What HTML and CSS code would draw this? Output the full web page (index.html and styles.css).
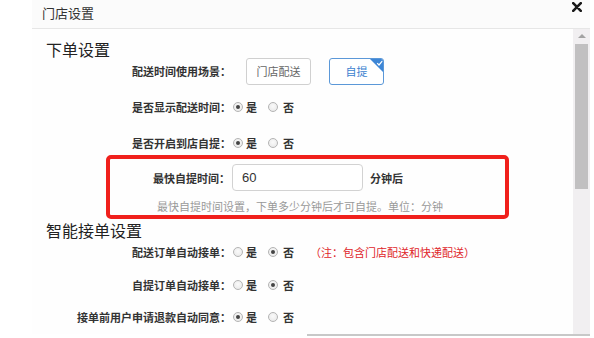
FILE: index.html
```html
<!DOCTYPE html>
<html lang="zh-CN">
<head>
<meta charset="utf-8">
<title>门店设置</title>
<link rel="stylesheet" href="styles.css">
</head>
<body>
<div class="dialog">
  <div class="header">
    <div class="title">门店设置</div>
    <div class="close">
      <svg width="10" height="10" viewBox="0 0 10 10"><path d="M1.2 1.2 L8.8 8.8 M8.8 1.2 L1.2 8.8" stroke="#1a1a1a" stroke-width="2.6" stroke-linecap="round"/></svg>
    </div>
  </div>
  <div class="body">
    <div class="content">
      <div class="heading h1">下单设置</div>

      <div class="row row-btns">
        <div class="label">配送时间使用场景：</div>
        <div class="opt-btn">门店配送</div>
        <div class="opt-btn active">自提
          <svg class="corner" width="16" height="16" viewBox="0 0 16 16"><polygon points="1,0 16,0 16,15" fill="#3d86d6"/><polyline points="9.2,5.2 11,7 14.2,3.2" fill="none" stroke="#fff" stroke-width="1.2"/></svg>
        </div>
      </div>

      <div class="row r2">
        <div class="label">是否显示配送时间：</div>
        <span class="radio on"></span><span class="rtext">是</span>
        <span class="radio second"></span><span class="rtext">否</span>
      </div>

      <div class="row r3">
        <div class="label">是否开启到店自提：</div>
        <span class="radio on"></span><span class="rtext">是</span>
        <span class="radio second"></span><span class="rtext">否</span>
      </div>

      <div class="redbox">
        <div class="inrow">
          <div class="label in-label">最快自提时间：</div>
          <div class="input">60</div>
          <div class="unit">分钟后</div>
        </div>
        <div class="hint">最快自提时间设置，下单多少分钟后才可自提。单位：分钟</div>
      </div>

      <div class="heading h2">智能接单设置</div>

      <div class="row r5">
        <div class="label">配送订单自动接单：</div>
        <span class="radio"></span><span class="rtext">是</span>
        <span class="radio on second"></span><span class="rtext">否</span>
        <span class="note">（注：包含门店配送和快递配送）</span>
      </div>

      <div class="row r6">
        <div class="label">自提订单自动接单：</div>
        <span class="radio"></span><span class="rtext">是</span>
        <span class="radio on second"></span><span class="rtext">否</span>
      </div>

      <div class="row r7">
        <div class="label">接单前用户申请退款自动同意：</div>
        <span class="radio on"></span><span class="rtext">是</span>
        <span class="radio second"></span><span class="rtext">否</span>
      </div>
    </div>
    <div class="scrollbar">
      <div class="arrow"></div>
      <div class="thumb"></div>
    </div>
  </div>
  <div class="footer-line"></div>
</div>
</body>
</html>
```

FILE: styles.css
```css
html, body {
  margin: 0;
  padding: 0;
  background: #ffffff;
}
body {
  width: 594px;
  height: 338px;
  overflow: hidden;
  font-family: "Noto Sans CJK SC", "Liberation Sans", sans-serif;
  color: #333;
}
.dialog {
  display: flex;
  flex-direction: column;
}
.header {
  display: flex;
  justify-content: space-between;
  align-items: flex-start;
  height: 28px;
  margin-left: 32px;
  margin-right: 4px;
  padding-left: 10px;
  padding-right: 8px;
  border-bottom: 1px solid #e6e6e6;
  background: #fbfbfb;
}
.title {
  font-size: 13px;
  line-height: 13px;
  margin-top: 6px;
  color: #333;
}
.close {
  margin-top: 2px;
  width: 10px;
  height: 10px;
  display: flex;
}
.body {
  display: flex;
  margin-left: 32px;
  margin-right: 4px;
  height: 305px;
}
.content {
  flex: 1;
  padding-left: 14px;
  background: #fefefe;
  display: flex;
  flex-direction: column;
  align-items: flex-start;
}
.heading {
  font-size: 16px;
  line-height: 16px;
  height: 16px;
  color: #222;
}
.h1 { margin-top: 12px; }
.h2 { margin-top: 3px; }

.row {
  display: flex;
  align-items: center;
  height: 20px;
  font-size: 11px;
}
.label {
  width: 185px;
  text-align: right;
  font-weight: 700;
  font-size: 11px;
  color: #333;
  white-space: nowrap;
}
.row-btns {
  height: 28px;
}
.r2 { margin-top: 12px; }
.r3 { margin-top: 16px; }
.r5 { margin-top: 4px; }
.r6 { margin-top: 13px; }
.r7 { margin-top: 12px; }

.opt-btn {
  position: relative;
  box-sizing: border-box;
  height: 27px;
  width: 65px;
  margin-left: 15px;
  border: 1px solid #d0d0d0;
  border-radius: 3px;
  font-size: 11px;
  color: #666;
  display: flex;
  align-items: center;
  justify-content: center;
  background: #fff;
}
.opt-btn.active {
  width: 55px;
  margin-left: 18px;
  border: 1.5px solid #5b98d8;
  color: #3b7fcf;
  overflow: hidden;
}
.corner {
  position: absolute;
  top: -1px;
  right: -1px;
}

.radio {
  box-sizing: border-box;
  width: 10px;
  height: 10px;
  border-radius: 50%;
  border: 1px solid #b4b4b4;
  background: radial-gradient(circle at 50% 40%, #fafafa 0%, #e6e6e6 100%);
  margin-left: 2px;
  position: relative;
  flex: none;
}
.radio.on::after {
  content: "";
  position: absolute;
  left: 2px;
  top: 2px;
  width: 4px;
  height: 4px;
  border-radius: 50%;
  background: #444;
}
.radio.second {
  margin-left: 11px;
}
.rtext {
  margin-left: 3px;
  font-weight: 700;
  font-size: 11px;
  color: #333;
  width: 11px;
}
.radio.second + .rtext {
  margin-left: 5px;
}
.note {
  margin-left: 16px;
  color: #e0262a;
  font-size: 11px;
}

.redbox {
  box-sizing: border-box;
  margin-top: 2px;
  margin-left: 60px;
  width: 403px;
  height: 64px;
  border: 4px solid #f0201c;
  border-radius: 5px;
  padding-top: 5px;
  display: flex;
  flex-direction: column;
}
.inrow {
  display: flex;
  align-items: center;
  height: 27px;
}
.in-label {
  width: 120px;
}
.input {
  box-sizing: border-box;
  margin-left: 2px;
  width: 131px;
  height: 27px;
  border: 1px solid #d2d2d2;
  border-radius: 4px;
  padding-left: 9px;
  font-family: "Liberation Sans", sans-serif;
  font-size: 13px;
  line-height: 25px;
  color: #333;
  background: #fff;
}
.unit {
  margin-left: 7px;
  font-weight: 700;
  font-size: 11px;
  color: #333;
}
.hint {
  margin-top: 7px;
  margin-left: 47px;
  font-size: 11px;
  line-height: 16px;
  color: #999;
  white-space: nowrap;
}

.scrollbar {
  width: 17px;
  background: #f1eff1;
  display: flex;
  flex-direction: column;
  align-items: center;
}
.arrow {
  margin-top: 5px;
  width: 0;
  height: 0;
  border-left: 4px solid transparent;
  border-right: 4px solid transparent;
  border-bottom: 4px solid #a3a3a3;
}
.thumb {
  margin-top: 6px;
  width: 13px;
  height: 145px;
  background: #c1c0c1;
}
.footer-line {
  margin-left: 307px;
  margin-right: 4px;
  height: 2px;
  background: #c8c8c8;
}
```
